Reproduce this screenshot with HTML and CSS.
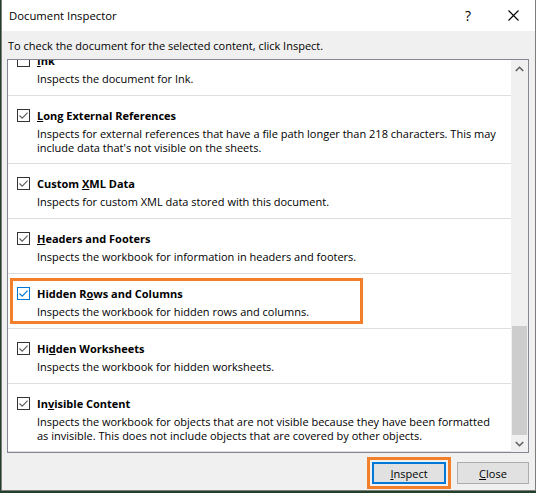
FILE: index.html
```html
<!DOCTYPE html>
<html>
<head>
<meta charset="utf-8">
<link rel="stylesheet" href="styles.css">
</head>
<body>
<div class="window">
  <div class="titlebar">
    <span class="title">Document Inspector</span>
    <span class="help">?</span>
    <svg class="close-x" width="11" height="11" viewBox="0 0 11 11"><path d="M0.5 0.5 L10.5 10.5 M10.5 0.5 L0.5 10.5" stroke="#000" stroke-width="1.1" fill="none"/></svg>
  </div>
  <div class="intro">To check the document for the selected content, click Inspect.</div>
  <div class="listbox">
    <div class="viewport">
      <div class="items">
        <div class="item">
          <div class="head"><span class="cb"></span><span class="name"><u>I</u>nk</span></div>
          <div class="desc">Inspects the document for Ink.</div>
        </div>
        <div class="item two">
          <div class="head"><span class="cb"><svg viewBox="0 0 11 11"><path d="M1.5 5.5 L4.2 8.2 L9.6 2.6" /></svg></span><span class="name"><u>L</u>ong External References</span></div>
          <div class="desc">Inspects for external references that have a file path longer than 218 characters. This may<br>include data that's not visible on the sheets.</div>
        </div>
        <div class="item">
          <div class="head"><span class="cb"><svg viewBox="0 0 11 11"><path d="M1.5 5.5 L4.2 8.2 L9.6 2.6" /></svg></span><span class="name">Custom <u>X</u>ML Data</span></div>
          <div class="desc">Inspects for custom XML data stored with this document.</div>
        </div>
        <div class="item">
          <div class="head"><span class="cb"><svg viewBox="0 0 11 11"><path d="M1.5 5.5 L4.2 8.2 L9.6 2.6" /></svg></span><span class="name"><u>H</u>eaders and Footers</span></div>
          <div class="desc">Inspects the workbook for information in headers and footers.</div>
        </div>
        <div class="item marked">
          <div class="head"><span class="cb hover"><svg viewBox="0 0 11 11"><path d="M1.5 5.5 L4.2 8.2 L9.6 2.6" /></svg></span><span class="name">Hidden R<u>o</u>ws and Columns</span></div>
          <div class="desc">Inspects the workbook for hidden rows and columns.</div>
        </div>
        <div class="item">
          <div class="head"><span class="cb"><svg viewBox="0 0 11 11"><path d="M1.5 5.5 L4.2 8.2 L9.6 2.6" /></svg></span><span class="name">Hi<u>d</u>den Worksheets</span></div>
          <div class="desc">Inspects the workbook for hidden worksheets.</div>
        </div>
        <div class="item two">
          <div class="head"><span class="cb"><svg viewBox="0 0 11 11"><path d="M1.5 5.5 L4.2 8.2 L9.6 2.6" /></svg></span><span class="name">In<u>v</u>isible Content</span></div>
          <div class="desc">Inspects the workbook for objects that are not visible because they have been formatted<br>as invisible. This does not include objects that are covered by other objects.</div>
        </div>
      </div>
    </div>
    <div class="scrollbar">
      <div class="arrow"><svg width="9" height="6" viewBox="0 0 9 6"><path d="M0.8 5 L4.5 1.3 L8.2 5" /></svg></div>
      <div class="track"><div class="thumb"></div></div>
      <div class="arrow"><svg width="9" height="6" viewBox="0 0 9 6"><path d="M0.8 1 L4.5 4.7 L8.2 1" /></svg></div>
    </div>
  </div>
  <div class="buttons">
    <button class="btn default"><u>I</u>nspect</button>
    <button class="btn"><u>C</u>lose</button>
  </div>
</div>
</body>
</html>
```
FILE: styles.css
```css
html, body {
  margin: 0;
  padding: 0;
}
body {
  background: #23402a;
  font-family: "Open Sans", "Noto Sans", sans-serif;
  font-size: 11px;
  color: #000;
  width: 536px;
  height: 493px;
  overflow: hidden;
}
.window {
  margin-left: 1px;
  width: 533px;
  height: 490px;
  background: #f0f0f0;
  border-left: 1px solid #7d7d7d;
  border-right: 1px solid #7d7d7d;
  border-bottom: 1px solid #7d7d7d;
  display: flex;
  flex-direction: column;
}
.titlebar {
  height: 31px;
  background: #ffffff;
  display: flex;
  align-items: center;
  flex-shrink: 0;
}
.title {
  padding-left: 7px;
  font-size: 11.3px;
  flex: 1;
}
.help {
  font-size: 14px;
  width: 12px;
  text-align: center;
  margin-right: 34px;
}
.close-x {
  margin-right: 16px;
}
.intro {
  padding: 7px 0 0 6px;
  line-height: 15px;
  height: 15px;
}
.listbox {
  margin: 6px 0 0 5px;
  width: 522px;
  height: 394px;
  box-sizing: border-box;
  border: 1px solid #828790;
  background: #fff;
  display: flex;
}
.viewport {
  flex: 1;
  overflow: hidden;
}
.items {
  margin-top: -19px;
}
.item {
  position: relative;
  padding: 12px 0 9px 9px;
  border-bottom: 1px solid #dedede;
}
.item.two {
  padding-bottom: 8px;
}
.item.marked::after {
  content: "";
  position: absolute;
  left: 2px;
  top: 4px;
  width: 353px;
  height: 46px;
  box-sizing: border-box;
  border: 3px solid #f47f2b;
}
.head {
  display: flex;
  align-items: center;
  height: 15px;
  line-height: 15px;
}
.cb {
  width: 13px;
  height: 13px;
  box-sizing: border-box;
  border: 1px solid #333;
  background: #fff;
  margin-right: 7px;
  flex-shrink: 0;
}
.cb svg {
  display: block;
  width: 11px;
  height: 11px;
  fill: none;
  stroke: #5d5d5d;
  stroke-width: 1.1;
}
.cb.hover {
  border-color: #0078d7;
}
.cb.hover svg {
  stroke: #0078d7;
}
.name {
  font-weight: bold;
}
.desc {
  margin: 4px 0 0 20px;
  line-height: 14px;
}
.scrollbar {
  width: 17px;
  background: #f0f0f0;
  display: flex;
  flex-direction: column;
  flex-shrink: 0;
}
.arrow {
  height: 17px;
  display: flex;
  align-items: center;
  justify-content: center;
}
.arrow svg {
  fill: none;
  stroke: #606060;
  stroke-width: 1.6;
}
.track {
  flex: 1;
  display: flex;
  flex-direction: column;
  justify-content: flex-end;
}
.thumb {
  height: 109px;
  margin: 0 1px;
  background: #cdcdcd;
}
.buttons {
  margin-top: 9px;
  padding-right: 6px;
  display: flex;
  justify-content: flex-end;
  gap: 11px;
}
.btn {
  font-family: "Open Sans", "Noto Sans", sans-serif;
  font-size: 11px;
  width: 72px;
  height: 22px;
  padding: 0;
  background: #e1e1e1;
  border: 1px solid #adadad;
  color: #000;
}
.btn.default {
  width: 74px;
  border: 2px solid #0078d7;
  outline: 3px solid #f47f2b;
  outline-offset: 2px;
}
```
